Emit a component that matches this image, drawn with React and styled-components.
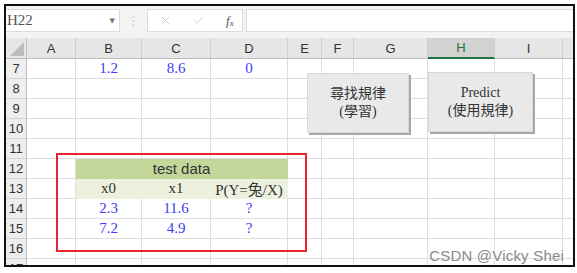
import React from 'react'
import styled, { createGlobalStyle } from 'styled-components'
import { X, Check } from 'lucide-react'

const GlobalStyle = createGlobalStyle`
  body {
    margin: 0;
    background: #fff;
  }
`

const columns = [
  { key: 'A', width: 49 },
  { key: 'B', width: 66 },
  { key: 'C', width: 69 },
  { key: 'D', width: 77 },
  { key: 'E', width: 34 },
  { key: 'F', width: 32 },
  { key: 'G', width: 74 },
  { key: 'H', width: 67, selected: true },
  { key: 'I', width: 68 },
  { key: 'J', width: 40, hidden: true },
]

const BLUE = '#3d3df2'
const DARK_GREEN = '#c4d79b'
const LIGHT_GREEN = '#ebf1de'

const cells = {
  7: { B: { text: '1.2', color: BLUE }, C: { text: '8.6', color: BLUE }, D: { text: '0', color: BLUE } },
  12: { B: { text: 'test data', span: 3, fill: DARK_GREEN, sans: true } },
  13: {
    B: { text: 'x0', fill: LIGHT_GREEN },
    C: { text: 'x1', fill: LIGHT_GREEN },
    D: { text: 'P(Y=兔/X)', fill: LIGHT_GREEN },
  },
  14: { B: { text: '2.3', color: BLUE }, C: { text: '11.6', color: BLUE }, D: { text: '?', color: BLUE } },
  15: { B: { text: '7.2', color: BLUE }, C: { text: '4.9', color: BLUE }, D: { text: '?', color: BLUE } },
}

const rows = [7, 8, 9, 10, 11, 12, 13, 14, 15, 16, 17]

const Page = styled.div`
  padding: 4px 2px 0 4px;
`

const Frame = styled.div`
  width: 567px;
  height: 259px;
  border: 2px solid #111;
  display: flex;
  flex-direction: column;
  overflow: hidden;
  background: #fff;
`

const FormulaBar = styled.div`
  height: 32px;
  flex: none;
  box-sizing: border-box;
  padding: 3px 0 6px 0;
  background: #f3f3f3;
  display: flex;
  align-items: stretch;
`

const NameBox = styled.div`
  width: 114px;
  box-sizing: border-box;
  background: #fff;
  border: 1px solid #dcdcdc;
  border-left: none;
  display: flex;
  align-items: center;
  justify-content: space-between;
  padding: 0 4px 0 1px;
  font-family: 'Liberation Serif', serif;
  font-size: 15px;
  color: #555;
`

const Caret = styled.span`
  font-family: 'DejaVu Sans', sans-serif;
  font-size: 7px;
  color: #777;
`

const Grip = styled.div`
  width: 27px;
  display: flex;
  align-items: center;
  justify-content: center;
  color: #c4c4c4;
  font-family: 'DejaVu Sans', sans-serif;
  font-size: 12px;
`

const FuncBox = styled.div`
  width: 96px;
  box-sizing: border-box;
  background: #fff;
  border: 1px solid #dcdcdc;
  display: flex;
  align-items: center;
  gap: 20px;
  padding-left: 11px;
  color: #b4b4b4;
`

const Fx = styled.span`
  font-family: 'Liberation Serif', serif;
  font-style: italic;
  font-size: 13px;
  color: #555;
  margin-left: 1px;

  sub {
    font-size: 9px;
    vertical-align: -1px;
  }
`

const FormulaInput = styled.div`
  flex: 1;
  margin-left: 3px;
  background: #fff;
  border: 1px solid #dcdcdc;
  border-right: none;
`

const Sheet = styled.div`
  flex: 1;
  position: relative;
  display: grid;
  grid-template-columns: 21px ${columns.map((c) => `${c.width}px`).join(' ')};
  grid-template-rows: 21px;
  grid-auto-rows: 20px;
  overflow: hidden;
  font-family: 'Liberation Serif', 'Noto Sans CJK TC', serif;
`

const Corner = styled.div`
  background: #e6e6e6;
  border-right: 1px solid #bdbdbd;
  border-bottom: 1px solid #bdbdbd;
  box-sizing: border-box;
  display: flex;
  align-items: flex-end;
  justify-content: flex-end;
  padding: 0 2px 2px 0;
`

const ColHead = styled.div`
  box-sizing: border-box;
  background: ${(p) => (p.$selected ? '#d2d2d2' : '#e6e6e6')};
  border-right: 1px solid #cfcfcf;
  border-bottom: ${(p) => (p.$selected ? '2px solid #217346' : '1px solid #bdbdbd')};
  color: ${(p) => (p.$selected ? '#217346' : '#333')};
  font-family: 'Liberation Sans', sans-serif;
  font-size: 13px;
  display: flex;
  align-items: center;
  justify-content: center;
`

const RowHead = styled.div`
  box-sizing: border-box;
  background: #eeeeee;
  border-right: 1px solid #bdbdbd;
  border-bottom: 1px solid #d4d4d4;
  color: #333;
  font-family: 'Liberation Sans', sans-serif;
  font-size: 13px;
  display: flex;
  align-items: center;
  justify-content: center;
`

const Cell = styled.div`
  box-sizing: border-box;
  grid-column: span ${(p) => p.$span || 1};
  background: ${(p) => p.$fill || '#fff'};
  border-right: 1px solid ${(p) => p.$fill || '#dedede'};
  border-bottom: 1px solid ${(p) => p.$fill || '#dedede'};
  color: ${(p) => p.$color || '#333'};
  font-family: ${(p) =>
    p.$sans ? "'Liberation Sans', sans-serif" : "'Liberation Serif', 'Noto Sans CJK TC', serif"};
  font-size: 15px;
  display: flex;
  align-items: center;
  justify-content: center;
  white-space: nowrap;
`

const ShapeButton = styled.div`
  position: absolute;
  left: ${(p) => p.$left}px;
  top: ${(p) => p.$top}px;
  width: ${(p) => p.$width}px;
  height: 60px;
  box-sizing: border-box;
  background: #e9e9e9;
  border: 1px solid #d8d8d8;
  box-shadow: 2px 2px 0 #a8a8a8;
  display: flex;
  flex-direction: column;
  align-items: center;
  justify-content: center;
  font-family: 'Liberation Serif', 'Noto Sans CJK TC', serif;
  font-size: 14px;
  line-height: 18px;
  color: #333;
`

const Highlight = styled.div`
  position: absolute;
  left: 50px;
  top: 115px;
  width: 251px;
  height: 99px;
  box-sizing: border-box;
  border: 2px solid #e5262b;
  pointer-events: none;
`

const Watermark = styled.div`
  position: absolute;
  right: 9px;
  bottom: 1px;
  font-family: 'Liberation Sans', sans-serif;
  font-size: 15px;
  color: #8a8a8a;
  letter-spacing: 0.2px;
`

function SheetRow({ row }) {
  const data = cells[row] || {}
  const out = [<RowHead key="h">{row}</RowHead>]
  let skip = 0
  columns.forEach((col) => {
    if (skip > 0) {
      skip -= 1
      return
    }
    const c = data[col.key]
    if (c && c.span) skip = c.span - 1
    out.push(
      <Cell key={col.key} $span={c?.span} $fill={c?.fill} $color={c?.color} $sans={c?.sans}>
        {c?.text}
      </Cell>
    )
  })
  return out
}

export default function App() {
  return (
    <Page>
      <GlobalStyle />
      <Frame>
        <FormulaBar>
          <NameBox>
            H22
            <Caret>▼</Caret>
          </NameBox>
          <Grip>⋮</Grip>
          <FuncBox>
            <X size={13} strokeWidth={1.2} />
            <Check size={13} strokeWidth={1.2} />
            <Fx>
              f<sub>x</sub>
            </Fx>
          </FuncBox>
          <FormulaInput />
        </FormulaBar>
        <Sheet>
          <Corner>
            <svg width="14" height="14" viewBox="0 0 14 14">
              <polygon points="14,0 14,14 0,14" fill="#bdbdbd" />
            </svg>
          </Corner>
          {columns.map((col) => (
            <ColHead key={col.key} $selected={col.selected}>
              {col.hidden ? null : col.key}
            </ColHead>
          ))}
          {rows.map((r) => (
            <SheetRow key={r} row={r} />
          ))}
          <ShapeButton $left={301} $top={35} $width={102}>
            <span>尋找規律</span>
            <span>(學習)</span>
          </ShapeButton>
          <ShapeButton $left={422} $top={34} $width={105}>
            <span>Predict</span>
            <span>(使用規律)</span>
          </ShapeButton>
          <Highlight />
          <Watermark>CSDN @Vicky Shei</Watermark>
        </Sheet>
      </Frame>
    </Page>
  )
}
